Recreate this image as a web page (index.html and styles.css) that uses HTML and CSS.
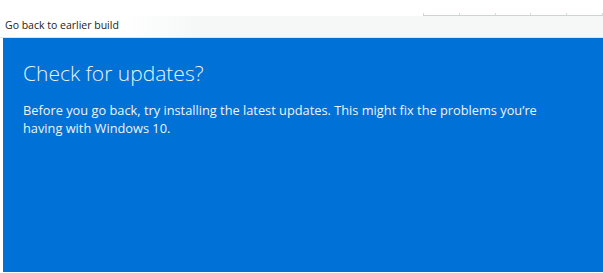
FILE: index.html
```html
<!DOCTYPE html>
<html>
<head>
<meta charset="utf-8">
<link rel="stylesheet" href="styles.css">
</head>
<body>
<div class="page">
  <div class="topbar">
    <div class="ruler">
      <span class="tick"></span><span class="tick"></span><span class="tick"></span><span class="tick"></span><span class="tick"></span><span class="tick"></span>
    </div>
  </div>
  <div class="header">Go back to earlier build</div>
  <div class="panel">
    <h1 class="title">Check for updates?</h1>
    <p class="desc">Before you go back, try installing the latest updates. This might fix the problems you’re having with Windows 10.</p>
  </div>
</div>
</body>
</html>
```
FILE: styles.css
```css
html, body {
  margin: 0;
  padding: 0;
  background: #ffffff;
}
body {
  width: 603px;
  height: 273px;
  overflow: hidden;
  font-family: "Open Sans", "Noto Sans", sans-serif;
}
.page {
  display: flex;
  flex-direction: column;
  height: 272px;
}
.topbar {
  height: 16px;
  display: flex;
  justify-content: flex-end;
}
.ruler {
  margin-top: 13px;
  width: 180px;
  height: 2px;
  border-bottom: 1px solid #cfd3d3;
  display: flex;
  justify-content: space-between;
}
.tick {
  width: 1px;
  height: 2px;
  background: #d8dada;
}
.header {
  height: 21px;
  padding-left: 5px;
  font-size: 10.5px;
  line-height: 18px;
  color: #222;
  background: linear-gradient(to right, #ffffff 0px, #ffffff 120px, #f6f7f7 200px);
  border-bottom: 1px solid #d6e6f6;
}
.panel {
  flex: 1;
  margin-left: 3px;
  background: #0071d6;
  color: #eef4fc;
  padding: 20px 20px 0 20px;
}
.title {
  margin: 0;
  font-size: 21px;
  font-weight: 300;
  line-height: 30px;
  color: #e9f1fb;
}
.desc {
  margin: 13px 0 0 0;
  font-size: 12.8px;
  line-height: 18px;
  max-width: 530px;
}
```
